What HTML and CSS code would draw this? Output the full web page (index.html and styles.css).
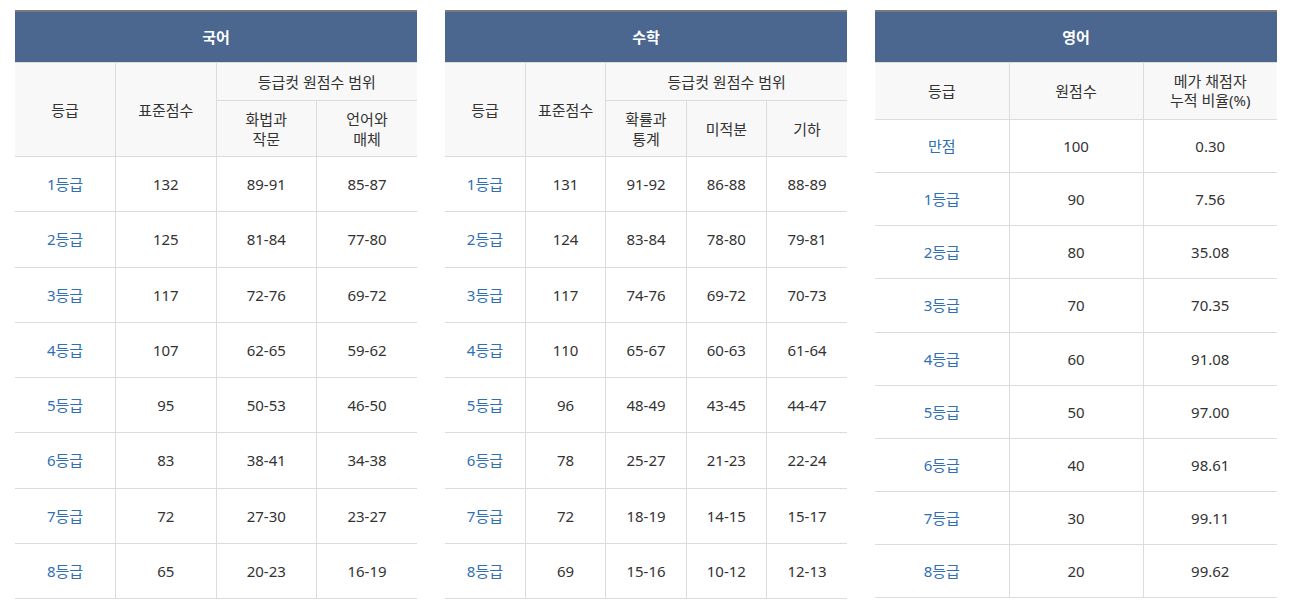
FILE: index.html
```html
<!DOCTYPE html>
<html lang="ko">
<head>
<meta charset="utf-8">
<title>등급컷</title>
<link rel="stylesheet" href="styles.css">
</head>
<body>
<div class="wrap">
  <table class="tbl tbl-kor">
    <thead>
      <tr class="title"><th colspan="4">국어</th></tr>
      <tr class="h1">
        <th rowspan="2">등급</th>
        <th rowspan="2">표준점수</th>
        <th colspan="2">등급컷 원점수 범위</th>
      </tr>
      <tr class="h2">
        <th>화법과<br>작문</th>
        <th>언어와<br>매체</th>
      </tr>
    </thead>
    <tbody>
      <tr><td class="g">1등급</td><td>132</td><td>89-91</td><td>85-87</td></tr>
      <tr><td class="g">2등급</td><td>125</td><td>81-84</td><td>77-80</td></tr>
      <tr><td class="g">3등급</td><td>117</td><td>72-76</td><td>69-72</td></tr>
      <tr><td class="g">4등급</td><td>107</td><td>62-65</td><td>59-62</td></tr>
      <tr><td class="g">5등급</td><td>95</td><td>50-53</td><td>46-50</td></tr>
      <tr><td class="g">6등급</td><td>83</td><td>38-41</td><td>34-38</td></tr>
      <tr><td class="g">7등급</td><td>72</td><td>27-30</td><td>23-27</td></tr>
      <tr><td class="g">8등급</td><td>65</td><td>20-23</td><td>16-19</td></tr>
    </tbody>
  </table>

  <table class="tbl tbl-math">
    <thead>
      <tr class="title"><th colspan="5">수학</th></tr>
      <tr class="h1">
        <th rowspan="2">등급</th>
        <th rowspan="2">표준점수</th>
        <th colspan="3">등급컷 원점수 범위</th>
      </tr>
      <tr class="h2">
        <th>확률과<br>통계</th>
        <th>미적분</th>
        <th>기하</th>
      </tr>
    </thead>
    <tbody>
      <tr><td class="g">1등급</td><td>131</td><td>91-92</td><td>86-88</td><td>88-89</td></tr>
      <tr><td class="g">2등급</td><td>124</td><td>83-84</td><td>78-80</td><td>79-81</td></tr>
      <tr><td class="g">3등급</td><td>117</td><td>74-76</td><td>69-72</td><td>70-73</td></tr>
      <tr><td class="g">4등급</td><td>110</td><td>65-67</td><td>60-63</td><td>61-64</td></tr>
      <tr><td class="g">5등급</td><td>96</td><td>48-49</td><td>43-45</td><td>44-47</td></tr>
      <tr><td class="g">6등급</td><td>78</td><td>25-27</td><td>21-23</td><td>22-24</td></tr>
      <tr><td class="g">7등급</td><td>72</td><td>18-19</td><td>14-15</td><td>15-17</td></tr>
      <tr><td class="g">8등급</td><td>69</td><td>15-16</td><td>10-12</td><td>12-13</td></tr>
    </tbody>
  </table>

  <table class="tbl tbl-eng">
    <thead>
      <tr class="title"><th colspan="3">영어</th></tr>
      <tr class="h3">
        <th>등급</th>
        <th>원점수</th>
        <th>메가 채점자<br>누적 비율(%)</th>
      </tr>
    </thead>
    <tbody>
      <tr><td class="g">만점</td><td>100</td><td>0.30</td></tr>
      <tr><td class="g">1등급</td><td>90</td><td>7.56</td></tr>
      <tr><td class="g">2등급</td><td>80</td><td>35.08</td></tr>
      <tr><td class="g">3등급</td><td>70</td><td>70.35</td></tr>
      <tr><td class="g">4등급</td><td>60</td><td>91.08</td></tr>
      <tr><td class="g">5등급</td><td>50</td><td>97.00</td></tr>
      <tr><td class="g">6등급</td><td>40</td><td>98.61</td></tr>
      <tr><td class="g">7등급</td><td>30</td><td>99.11</td></tr>
      <tr><td class="g">8등급</td><td>20</td><td>99.62</td></tr>
    </tbody>
  </table>
</div>
</body>
</html>
```

FILE: styles.css
```css
html, body {
  margin: 0;
  padding: 0;
  background: #fff;
}

body {
  font-family: "Noto Sans", "Noto Sans CJK KR", sans-serif;
  color: #333;
}

.wrap {
  display: flex;
  gap: 28px;
  padding: 10px 0 0 15px;
  align-items: flex-start;
}

.tbl {
  width: 402px;
  table-layout: fixed;
  border-collapse: collapse;
  border-top: 2px solid #7a7a7a;
  font-size: 15px;
}

.tbl th,
.tbl td {
  border: 1px solid #dcdcdc;
  text-align: center;
  vertical-align: middle;
  padding: 0;
  line-height: 20px;
}

.tbl tr > :first-child { border-left: none; }
.tbl tr > :last-child { border-right: none; }
.tbl .h2 > :first-child { border-left: 1px solid #dcdcdc; }

.tbl th {
  background: #f8f8f8;
  font-weight: 400;
  color: #333;
}

.tbl .title th {
  background: #4b6790;
  color: #fff;
  font-weight: 700;
  height: 50px;
  border-left: none;
  border-right: none;
  border-top: none;
}

.tbl .h1 th { height: 37px; }
.tbl .h2 th { height: 55px; }
.tbl .h3 th { height: 56px; line-height: 19px; }

.tbl-kor tbody tr,
.tbl-math tbody tr { height: 55.25px; }

.tbl-eng tbody tr { height: 53.15px; }

.tbl td { color: #333; }
.tbl td.g { color: #2f6fb3; }
```
